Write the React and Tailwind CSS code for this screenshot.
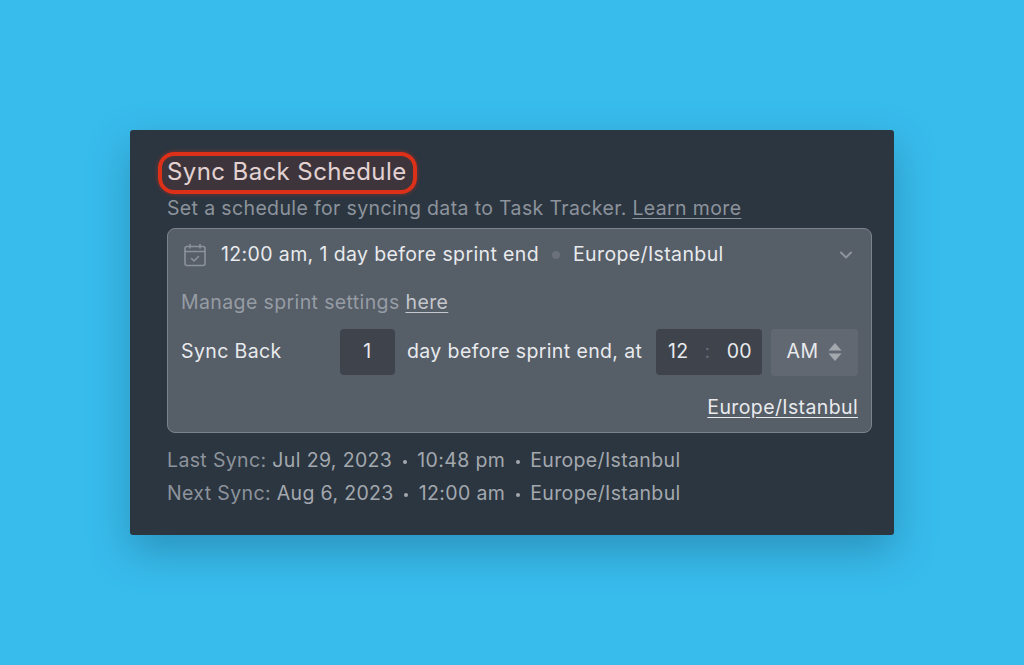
function CalendarCheck() {
  return (
    <svg width="24" height="24" viewBox="0 0 24 24" fill="none" stroke="#8c929a" strokeWidth="1.6" strokeLinecap="round" strokeLinejoin="round">
      <rect x="2" y="3.5" width="20" height="19" rx="2" />
      <path d="M2 8.5h20" />
      <path d="M7 1.5v3.5M17 1.5v3.5" />
      <path d="M8.5 15.5l2.5 2.5 4.5-4.5" />
    </svg>
  );
}

function Stepper() {
  return (
    <svg width="14" height="20" viewBox="0 0 14 20" fill="#a3a8ae">
      <path d="M7 1l6.5 7.5h-13z" />
      <path d="M7 19l6.5-7.5h-13z" />
    </svg>
  );
}

function Dot() {
  return <span className="inline-block w-[4px] h-[4px] rounded-full bg-[#a3a8af] mx-[10.5px] align-middle" />;
}

export default function App() {
  return (
    <div
      className="h-[665px] w-full flex items-center justify-center bg-[#38bcec] overflow-hidden"
      style={{ fontFamily: "Inter, 'Noto Sans', sans-serif" }}
    >
      <div className="w-[764px] h-[405px] bg-[#2c3640] rounded-[3px] shadow-[0_16px_40px_rgba(20,70,100,0.35)] pl-[37px] pr-[22px] pt-[22px]">
        {/* Title with red annotation */}
        <div className="relative w-fit h-[40px] flex items-center text-[24px] leading-[40px] text-[#e6e4e8] tracking-[0.4px]">
          Sync Back Schedule
          <div className="absolute left-[-9px] right-[-10px] top-0 h-[42px] rounded-[16px] border-[4px] border-[#dc3018] bg-[#dc3018]/10 shadow-[0_0_4px_rgba(226,48,26,0.5)]" />
        </div>

        <p className="mt-[2px] h-[28px] text-[19.5px] leading-[28px] tracking-[0.36px] text-[#8c939c]">
          Set a schedule for syncing data to Task Tracker. <span className="underline underline-offset-[3px]">Learn more</span>
        </p>

        {/* Schedule box */}
        <div className="mt-[6px] w-[705px] h-[205px] rounded-[8px] border border-[#7d838c] bg-[#565e68] px-[13px] text-[19.5px] tracking-[0.38px] text-[#e8eaed]">
          <div className="h-[51px] flex items-center pl-[2px] pr-[5px]">
            <CalendarCheck />
            <span className="ml-[14px]">12:00 am, 1 day before sprint end</span>
            <span className="ml-[13px] w-[8px] h-[8px] rounded-full bg-[#6b717a]" />
            <span className="ml-[13px]">Europe/Istanbul</span>
            <svg className="ml-auto" width="14" height="10" viewBox="0 0 14 10" fill="none" stroke="#8e949c" strokeWidth="2" strokeLinecap="round" strokeLinejoin="round">
              <path d="M2 2.5l5 5 5-5" />
            </svg>
          </div>

          <p className="mt-[8px] h-[28px] leading-[28px] text-[#969ca4]">
            Manage sprint settings <span className="text-[#c4c7cc] underline underline-offset-[3px]">here</span>
          </p>

          <div className="mt-[13px] h-[46px] flex items-center">
            <span className="w-[159px]">Sync Back</span>
            <div className="w-[55px] h-[46px] rounded-[4px] bg-[#3e434c] flex items-center justify-center">1</div>
            <span className="ml-[12px]">day before sprint end, at</span>
            <div className="ml-auto w-[106px] h-[46px] rounded-[4px] bg-[#3e434c] flex items-center justify-between pl-[12px] pr-[10px]">
              <span>12</span>
              <span className="text-[#666c75]">:</span>
              <span>00</span>
            </div>
            <div className="ml-[9px] w-[87px] h-[47px] rounded-[4px] bg-[#626871] flex items-center justify-center gap-[10px]">
              <span>AM</span>
              <Stepper />
            </div>
          </div>

          <div className="mt-[18px] text-right leading-[28px]">
            <span className="underline underline-offset-[3px]">Europe/Istanbul</span>
          </div>
        </div>

        {/* Sync history */}
        <div className="mt-[11px] text-[19.5px] leading-[33px] tracking-[0.36px] text-[#a3a8af]">
          <p>
            <span className="text-[#8c939c]">Last Sync:</span> Jul 29, 2023<Dot />10:48 pm<Dot />Europe/Istanbul
          </p>
          <p>
            <span className="text-[#8c939c]">Next Sync:</span> Aug 6, 2023<Dot />12:00 am<Dot />Europe/Istanbul
          </p>
        </div>
      </div>
    </div>
  );
}
